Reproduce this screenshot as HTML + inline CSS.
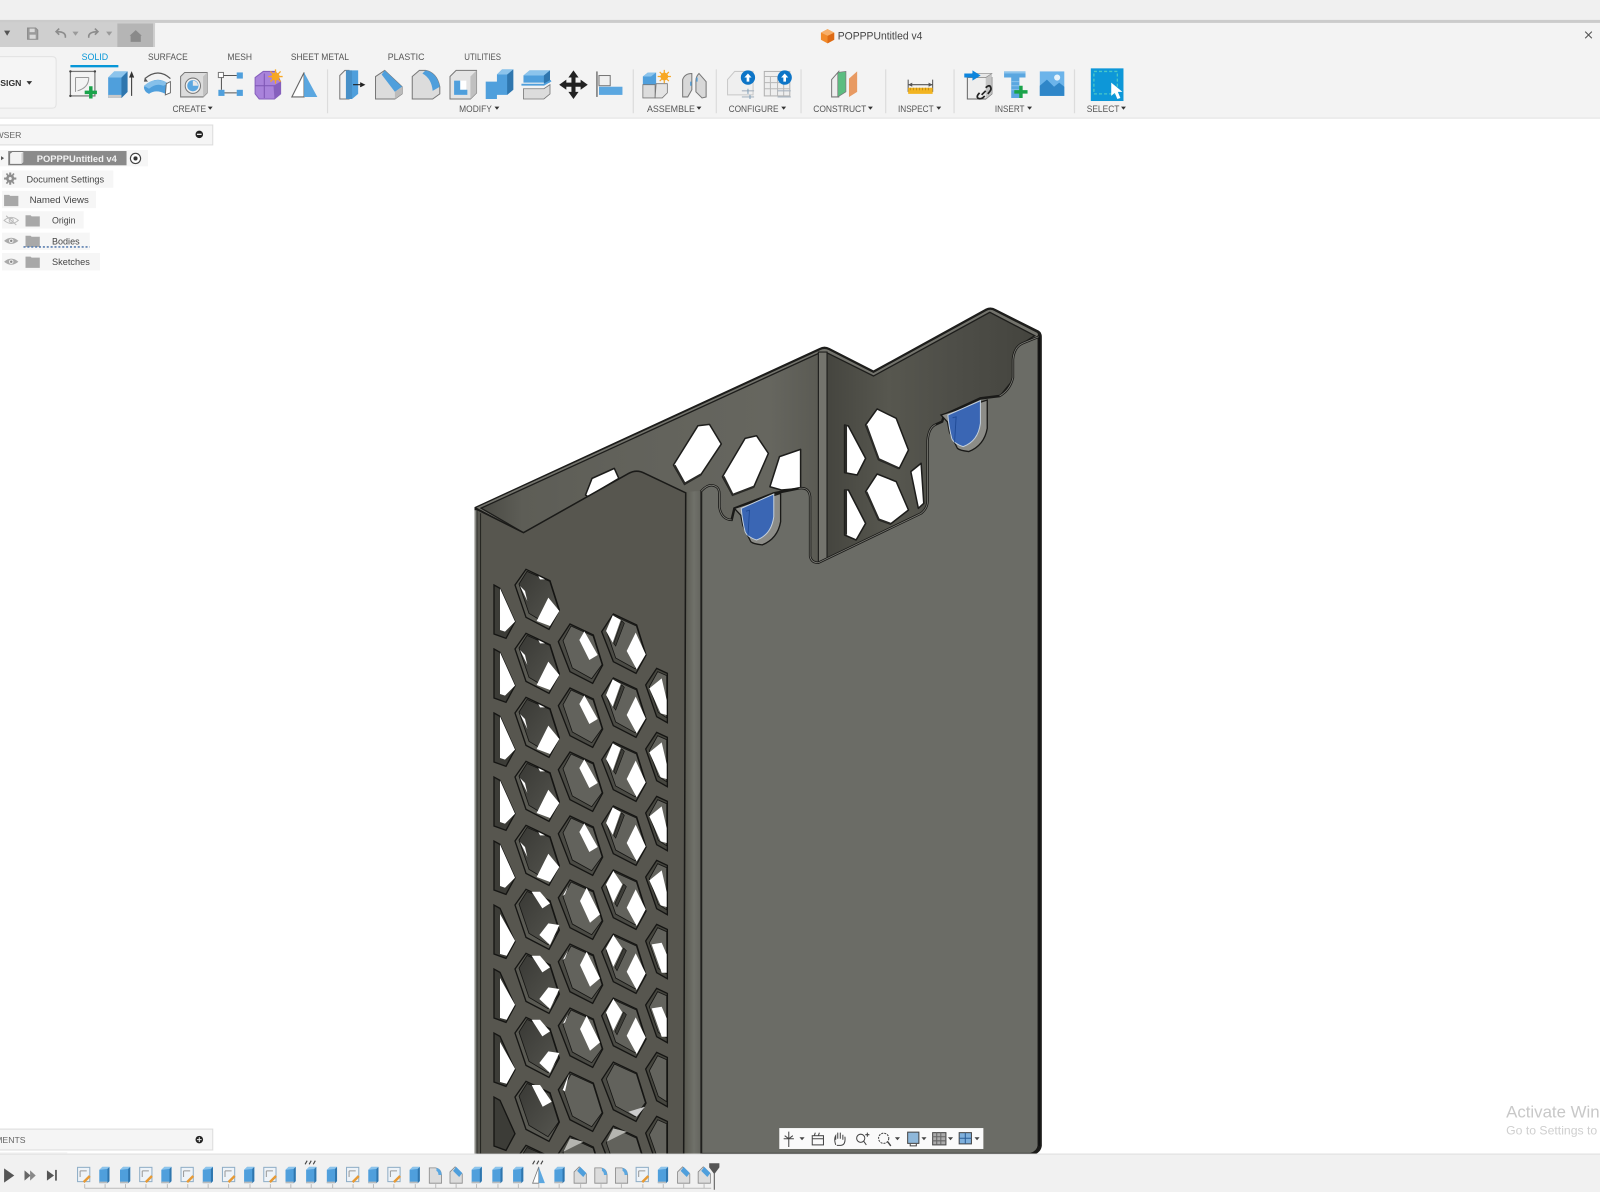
<!DOCTYPE html>
<html><head><meta charset="utf-8"><title>Fusion</title>
<style>
html,body{margin:0;padding:0;background:#fff;width:1600px;height:1192px;overflow:hidden}
svg{display:block;position:absolute;left:0;top:0;filter:blur(.35px)}
text{font-family:"Liberation Sans",sans-serif}
</style></head><body>
<svg xmlns="http://www.w3.org/2000/svg" width="1600" height="1192" viewBox="0 0 1568 1168.16">
<defs>
<linearGradient id="gBL" x1="0" y1="0" x2="1" y2="0"><stop offset="0" stop-color="#4a4a44"/><stop offset=".12" stop-color="#5d5d56"/><stop offset=".45" stop-color="#62625b"/><stop offset=".85" stop-color="#66665f"/><stop offset="1" stop-color="#5a5a53"/></linearGradient>
<linearGradient id="gBR" x1="0" y1="0" x2="1" y2="0"><stop offset="0" stop-color="#45453f"/><stop offset=".3" stop-color="#57574f"/><stop offset=".6" stop-color="#4e4e48"/><stop offset="1" stop-color="#44443e"/></linearGradient>
<linearGradient id="gC" x1="0" y1="0" x2="1" y2="0"><stop offset="0" stop-color="#58584f"/><stop offset=".6" stop-color="#70716a"/><stop offset="1" stop-color="#63645d"/></linearGradient>
<linearGradient id="gI" x1="0" y1="0" x2="1" y2="1"><stop offset="0" stop-color="#393935"/><stop offset="1" stop-color="#55554f"/></linearGradient>

<!-- perforation holes -->
<g id="hB"><polygon points="0,47 33,0 105,34 133,122 102,180 33,144" fill="#5a5a53" stroke="#151513" stroke-width="4"/><polygon points="12,44 36,6 104,36 131,122 99,166 42,132" fill="url(#gI)" stroke="#151513" stroke-width="2.500"/></g>
<g id="hC"><polygon points="0,53 35,0 105,33 133,123 103,178 35,143" fill="#4b4b45" stroke="#151513" stroke-width="4"/><polygon points="14,50 38,6 104,36 131,122 100,164 42,132" fill="#62625c" stroke="#151513" stroke-width="2.500"/></g>
<g id="B1"><use href="#hB"/><polygon points="65,155 100,85 133,125 105,170" fill="#fff"/><polygon points="15,50 30,65 37,95" fill="#fff"/><polygon points="70,20 90,30 75,30" fill="#fff"/></g>
<g id="B2"><use href="#hB"/><polygon points="50,7 75,7 105,42 82,57" fill="#fff"/><polygon points="73,137 100,102 133,107 105,167" fill="#fff"/></g>
<g id="B3"><use href="#hB"/><polygon points="50,11 75,11 110,61 83,76" fill="#fff"/></g>
<g id="C1"><use href="#hC"/><polygon points="63,48 78,22 118,93 93,108" fill="#fff"/></g>
<g id="C2"><use href="#hC"/><polygon points="65,63 85,23 125,103 95,128" fill="#fff"/><polygon points="13,48 30,18 20,43" fill="#fff"/></g>
<g id="C3"><use href="#hC"/><polygon points="13,54 32,5 20,58" fill="#fff"/></g>
<g id="D1"><use href="#hC"/><polygon points="13,51 33,4 57,18 33,86" fill="#fff"/><polygon points="75,111 102,56 132,121 105,166" fill="#fff"/><path d="M60,20 L36,88 L42,96 L68,28Z" fill="#3d3d38" stroke="#151513" stroke-width="2"/></g>
<g id="D2"><use href="#hC"/><polygon points="13,43 35,3 62,43 35,98" fill="#fff"/><polygon points="75,113 102,58 132,118 105,168" fill="#fff"/><path d="M66,42 L40,100 L46,110 L74,50Z" fill="#3d3d38" stroke="#151513" stroke-width="2"/></g>
<g id="D3"><use href="#hC"/><polygon points="80,149 130,134 105,164" fill="#ccc"/></g>
<g id="D4"><use href="#hC"/><polygon points="15,47 35,7 75,17" fill="#b5b5b0"/></g>
<g id="hE"><polygon points="0,50 33,0 65,15 65,163 33,145" fill="#46463f" stroke="#151513" stroke-width="4"/><polygon points="11,55 36,10 63,22 63,148 38,132" fill="#64645e" stroke="#151513" stroke-width="2.500"/></g>
<g id="E1"><use href="#hE"/><polygon points="11,60 48,30 63,95 63,140 45,135" fill="#fff"/></g>
<g id="E2"><use href="#hE"/><polygon points="18,60 48,55 63,90 63,145 48,145" fill="#fff"/></g>
<g id="hA"><polygon points="0,0 18,10 63,110 36,160 0,147" fill="#3c3c37" stroke="#151513" stroke-width="4"/></g>
<g id="A1"><use href="#hA"/><polygon points="18,10 63,110 33,140 18,135" fill="#fff"/></g>
<g id="A2"><use href="#hA"/><polygon points="18,27 63,107 38,152 18,147" fill="#fff"/></g>

<!-- timeline icons -->
<g id="tS"><rect x="-6" y="-7.500" width="12" height="14" fill="#eef3f8" stroke="#8fadc6"/><path d="M-3.500,-4 H3 M-3.500,-4 V2" stroke="#999" fill="none"/><path d="M0,7 L6,1" stroke="#e79a35" stroke-width="2.400"/></g>
<g id="tB"><path d="M-5,-5 L-2,-8 H5 V6 L3,8 H-5Z" fill="#4f9fdc"/><path d="M3,-6 L5,-8 V6 L3,8Z" fill="#2f76ae"/><path d="M-5,-5 L-2,-8 H5 L3,-6Z" fill="#8cc4ec"/><rect x="-5" y="6.500" width="8" height="1.500" fill="#bbb"/></g>
<g id="tF"><path d="M-6,8 V-7 H0 Q6,-6 6,1 V8Z" fill="#dcdcdc" stroke="#888" stroke-width=".8"/><path d="M1,-7 Q6,-6 6,0 L3,0 Q3,-3 1,-4Z" fill="#5ba7e0"/></g>
<g id="tC"><path d="M-6,8 V-3 L-1,-8 L6,-1 V8Z" fill="#dcdcdc" stroke="#888" stroke-width=".8"/><path d="M-3,-4 L0,-8 L6,-2 L3,2Z" fill="#4f9fdc"/></g>
<g id="tM"><path d="M-6,8 L0,-8 V8Z" fill="#fff" stroke="#777" stroke-width=".8"/><path d="M0,-8 L6,8 H0Z" fill="#5ba7e0"/></g>

<g id="eye"><path d="M-7,0 Q0,-6 7,0 Q0,6 -7,0Z" fill="#aaa"/><circle r="2.200" fill="#eee"/><circle r="1.200" fill="#888"/></g>
<g id="fold"><path d="M-7,-5 H-2 L-1,-4 H7 V6 H-7Z" fill="#a8a8a8"/></g>
<path id="tri" d="M-2.400,0 H2.400 L0,3Z" fill="#333"/>
</defs>

<rect width="1568" height="1169" fill="#fff"/>
<!-- top bands -->
<rect width="1568" height="20" fill="#f0f0f0"/>
<rect y="19.500" width="1568" height="3" fill="#cbcbcb"/>
<rect y="22.500" width="1568" height="93" fill="#f3f3f3"/>
<rect y="115" width="1568" height="1.500" fill="#e9e9e9"/>
<path d="M0,22.500 H152 V46 H0Z" fill="#cfcfcf"/>
<path d="M115,23 H150 V46 H115Z" fill="#b5b5b5"/>
<path d="M152,46 V26 Q152,22.500 156,22.500 H160 V46Z" fill="#f3f3f3"/>
<path d="M4,30 H10 L7,35Z" fill="#555"/>
<g fill="none" stroke="#8c8c8c">
<path d="M27,27.500 H35 L37,29.500 V38.500 H27Z" fill="#9b9b9b" stroke="#8c8c8c"/><rect x="29" y="28" width="5" height="3.500" fill="#d8d8d8" stroke="none"/><rect x="29" y="34" width="6" height="4" fill="#d8d8d8" stroke="none"/>
<path d="M64,37 Q65,31 56,31 M58,28 L55,31 L58,34" stroke-width="1.600"/>
<path d="M87,37 Q86,31 96,31 M93,28 L96,31 L93,34" stroke-width="1.600"/>
</g>
<path d="M71,31 H77 L74,35Z M104,31 H110 L107,35Z" fill="#9a9a9a"/>
<path d="M127,35 L133,29.500 L139,35 H138 V41 H128 V35Z" fill="#8a8a8a"/>

<!-- title -->
<path d="M811,28.500 L817.500,32 V39 L811,42.500 L804.500,39 V32Z" fill="#f28a2a"/><path d="M811,35 L817.500,32 V39 L811,42.500Z" fill="#dd6a14"/><path d="M811,28.500 L817.500,32 L811,35 L804.500,32Z" fill="#f7ae68"/>
<text x="821" y="38.500" font-size="10.500" fill="#444" textLength="83" lengthAdjust="spacingAndGlyphs">POPPPUntitled v4</text>
<path d="M1553.500,31 L1560,37.500 M1560,31 L1553.500,37.500" stroke="#555" stroke-width="1.100"/>

<!-- design box -->
<path d="M0,55.500 H51 Q55,55.500 55,59 V102 Q55,106 51,106 H0" fill="#f5f5f5" stroke="#e2e2e2"/>
<text x="21" y="84.500" font-size="8.500" font-weight="bold" fill="#333" text-anchor="end">DESIGN</text>
<path d="M26,79.500 H31.500 L28.700,83Z" fill="#333"/>

<!-- tabs -->
<g font-size="9" fill="#555">
<text x="80" y="59" fill="#0696d7" textLength="26" lengthAdjust="spacingAndGlyphs">SOLID</text>
<text x="145" y="59" textLength="39" lengthAdjust="spacingAndGlyphs">SURFACE</text>
<text x="223" y="59" textLength="24" lengthAdjust="spacingAndGlyphs">MESH</text>
<text x="285" y="59" textLength="57" lengthAdjust="spacingAndGlyphs">SHEET METAL</text>
<text x="380" y="59" textLength="36" lengthAdjust="spacingAndGlyphs">PLASTIC</text>
<text x="455" y="59" textLength="36" lengthAdjust="spacingAndGlyphs">UTILITIES</text>
<text x="169" y="110" textLength="33" lengthAdjust="spacingAndGlyphs">CREATE</text>
<text x="450" y="110" textLength="32" lengthAdjust="spacingAndGlyphs">MODIFY</text>
<text x="634" y="110" textLength="47" lengthAdjust="spacingAndGlyphs">ASSEMBLE</text>
<text x="714" y="110" textLength="49" lengthAdjust="spacingAndGlyphs">CONFIGURE</text>
<text x="797" y="110" textLength="52" lengthAdjust="spacingAndGlyphs">CONSTRUCT</text>
<text x="880" y="110" textLength="35" lengthAdjust="spacingAndGlyphs">INSPECT</text>
<text x="975" y="110" textLength="29" lengthAdjust="spacingAndGlyphs">INSERT</text>
<text x="1065" y="110" textLength="32" lengthAdjust="spacingAndGlyphs">SELECT</text>
</g>
<rect x="69" y="63.700" width="47" height="2.300" fill="#0696d7"/>
<use href="#tri" x="206" y="104.500"/><use href="#tri" x="487" y="104.500"/><use href="#tri" x="685" y="104.500"/><use href="#tri" x="768" y="104.500"/><use href="#tri" x="853" y="104.500"/><use href="#tri" x="920" y="104.500"/><use href="#tri" x="1009" y="104.500"/><use href="#tri" x="1101" y="104.500"/>
<g stroke="#dcdcdc" stroke-width="1.200"><path d="M321,68 V111 M620.600,68 V111 M702,68 V111 M785,68 V111 M868,68 V111 M935,68 V111 M1053,68 V111"/></g>

<!-- CREATE icons -->
<g>
<rect x="69" y="70" width="24" height="24" fill="none" stroke="#777" stroke-width="1.200"/>
<path d="M74,76 H87 M74,76 V90 M87,76 Q87,86 76,89" stroke="#999" fill="none"/>
<path d="M83,90.500 H95 M89,84.500 V96.500" stroke="#1aa34a" stroke-width="3.400" fill="none"/>
<g fill="#444"><circle cx="69" cy="70" r="1.200"/><circle cx="93" cy="70" r="1.200"/><circle cx="69" cy="94" r="1.200"/></g>
<path d="M106,76 L112,70 H125 V90 L119,96 H106Z" fill="#4f9fdc"/>
<path d="M119,76 L125,70 V90 L119,96Z" fill="#2f76ae"/>
<path d="M106,76 L112,70 H125 L119,76Z" fill="#8cc4ec"/>
<path d="M106,93 H119 V96 H106Z" fill="#c9c9c9"/>
<path d="M129,94 V74 M127,76 L129,71 L131,76" stroke="#333" fill="#333" stroke-width="1"/>
<path d="M142,77 Q155,66 167,77" stroke="#555" fill="none" stroke-width="1.200"/>
<path d="M142,76 L141,80 L145,80Z" fill="#555"/>
<path d="M141,85 Q153,73 165,82 L162,92 Q153,87 146,92 Q141,90 141,85Z" fill="#4f9fdc"/>
<path d="M141,84 Q153,74 165,82 L160,84 Q153,81 146,87Z" fill="#86c0ea"/>
<path d="M163,82 L167,80 V91 L162,93Z" fill="#fff" stroke="#666" stroke-width=".9"/>
<path d="M177,75 L181,71 H203 V91 L199,95 H177Z" fill="#dcdcdc" stroke="#777"/>
<path d="M199,75 L203,71 V91 L199,95Z" fill="#c0c0c0"/>
<circle cx="189" cy="84" r="7.500" fill="#f0f0f0" stroke="#777"/><circle cx="189" cy="84" r="5.500" fill="#5ba7e0"/><path d="M189,79 A5,5 0 0 1 194,84 L189,84Z" fill="#e8e8e8"/>
<g><rect x="214" y="71" width="5" height="5" fill="#fff" stroke="#777"/><rect x="232" y="71" width="6" height="6" fill="#4f9fdc"/><rect x="214" y="88" width="6" height="6" fill="#4f9fdc"/><rect x="232" y="88" width="6" height="6" fill="#4f9fdc"/><path d="M219,74 H232 M217,76 V88 M220,91 H232" stroke="#555" fill="none"/></g>
<path d="M250,76 L258,70 H270 L275,80 V92 L269,97 H254 L250,92Z" fill="#a983db" stroke="#8660bd"/>
<path d="M250,84 H269 M259,72 V96" stroke="#7e56b4" fill="none"/>
<path d="M268,84 L275,80 V92 L269,97Z" fill="#8660bd"/>
<circle cx="270" cy="75" r="4" fill="#f7a723"/><path d="M270,68 V82 M263,75 H277 M265,70 L275,80 M275,70 L265,80" stroke="#f7a723" stroke-width="1.300"/>
<path d="M286,95 L298,71 V95Z" fill="#fff" stroke="#666" stroke-width="1.100"/>
<path d="M298,71 L311,95 H298Z" fill="#5ba7e0"/>
</g>
<!-- MODIFY icons -->
<g>
<path d="M333,97 V74 L338,69 H342 V97Z" fill="#f1f1f1" stroke="#777"/>
<path d="M340,69 H351 V92 L345,97 H340Z" fill="#4f9fdc"/><path d="M339,69 H345 V97 H339Z" fill="#4790c8"/>
<path d="M346,83 H355 M353,81 L357,83 L353,85" stroke="#222" fill="#222"/>
<path d="M368,75 L377,69 L394,85 V92 L387,97 H368Z" fill="#dcdcdc" stroke="#777"/>
<path d="M374,73 L377,69 L394,85 L387,90Z" fill="#4f9fdc"/>
<path d="M387,90 L394,85 V92 L387,97Z" fill="#bbb"/>
<path d="M404,75 L411,69 H417 Q428,71 431,85 V92 L424,97 H404Z" fill="#dcdcdc" stroke="#777"/>
<path d="M414,72 L417,69 Q428,71 431,85 L424,89 Q423,77 414,72Z" fill="#4f9fdc"/>
<path d="M441,75 L447,69 H467 V91 L461,97 H441Z" fill="#e4e4e4" stroke="#777"/>
<path d="M461,75 L467,69 V91 L461,97Z" fill="#c0c0c0"/>
<rect x="445" y="79" width="12" height="14" fill="#fff"/>
<path d="M445,79 H451 V88 H458 V93 H445Z" fill="#4f9fdc"/>
<path d="M476,80 H487 V73 L492,68 H503 V88 L497,93 H487 V97 H476Z" fill="#4f9fdc"/>
<path d="M497,73 L503,68 V88 L497,93Z" fill="#2f76ae"/><path d="M487,73 L492,68 H503 L497,73Z" fill="#8cc4ec"/>
<path d="M513,74 L519,69 H539 V81 H513Z" fill="#4f9fdc"/><path d="M513,74 L519,69 H539 L533,74Z" fill="#8cc4ec"/><path d="M533,74 L539,69 V80 L533,82Z" fill="#2f76ae"/>
<path d="M511,83 H533 L540,79" stroke="#4f9fdc" stroke-width="1.800" fill="none"/>
<path d="M513,87 H533 L539,83 V92 L533,97 H513Z" fill="#dcdcdc" stroke="#777" stroke-width=".8"/>
<path d="M562,69 L567,76 H564 V81 H569 V78 L576,83 L569,88 V85 H564 V90 H567 L562,97 L557,90 H560 V85 H555 V88 L548,83 L555,78 V81 H560 V76 H557Z" fill="#222"/>
<path d="M585,70 V95" stroke="#666" stroke-width="1.300"/><rect x="587" y="74" width="11" height="10" fill="#efefef" stroke="#777"/><rect x="587" y="85" width="23" height="8" fill="#5ba7e0"/>
</g>
<!-- ASSEMBLE -->
<g>
<path d="M630,75 L635,71 H643 V83 H630Z" fill="#4f9fdc"/><path d="M630,75 L635,71 H643 L638,75Z" fill="#8cc4ec"/>
<path d="M630,83 H642 V96 H630Z" fill="#dcdcdc" stroke="#777" stroke-width=".8"/>
<path d="M643,82 L654,82 V91 L649,96 H642Z" fill="#e4e4e4" stroke="#777" stroke-width=".8"/>
<circle cx="651" cy="75" r="3.800" fill="#f7a723"/><path d="M651,68.500 V81.500 M644.500,75 H657.500 M646.500,70.500 L655.500,79.500 M655.500,70.500 L646.500,79.500" stroke="#f7a723" stroke-width="1.200"/>
<path d="M669,95 V78 Q671,72 678,72 V88 L674,95Z" fill="#d8d8d8" stroke="#777"/>
<path d="M692,95 V80 L685,72 Q682,75 682,79 V90 L688,96Z" fill="#d8d8d8" stroke="#777"/>
<path d="M677,84 V80 M683,80 V76" stroke="#4f9fdc" stroke-width="1.300"/>
</g>
<!-- CONFIGURE -->
<g>
<path d="M713,78 L720,70 H738 V93 H713Z" fill="#efefef" stroke="#c8c8c8"/>
<path d="M727,89 H739 M727,95 H739" stroke="#a8b4c0" stroke-width="1.200"/>
<path d="M733,87 V92 M735,93 V97" stroke="#7d9db8"/>
<circle cx="733" cy="76" r="7" fill="#0d75c7"/><path d="M733,72 L736.500,76 H734.300 V80 H731.700 V76 H729.500Z" fill="#fff"/>
<rect x="749" y="70" width="25" height="24" fill="#eee" stroke="#b0b0b0"/>
<path d="M749,75 H774 M755,75 V94 M762,75 V94 M768,75 V94 M749,81 H774 M749,87 H774" stroke="#b8b8b8" fill="none"/>
<path d="M762,89 H775 M762,95 H775" stroke="#a8b4c0" stroke-width="1.200"/>
<circle cx="769" cy="76" r="7" fill="#0d75c7"/><path d="M769,72 L772.500,76 H770.300 V80 H767.700 V76 H765.500Z" fill="#fff"/>
</g>
<!-- CONSTRUCT -->
<path d="M815,78 L822,70 V95 L815,95Z" fill="#eee" stroke="#777"/><path d="M821,71 L829,70 V90 L821,95Z" fill="#5cbd80" stroke="#777" stroke-width=".7"/>
<path d="M832,77 L840,70 V90 L832,95Z" fill="#e89a62"/>
<!-- INSPECT -->
<path d="M890,78 V90 M914,78 V90 M890,83 H914" stroke="#555" fill="none"/><path d="M890,83 L894,81 V85Z M914,83 L910,81 V85Z" fill="#555"/>
<rect x="890" y="86" width="24" height="6" fill="#f2b420"/>
<path d="M892,86 V88.500 M895,86 V88.500 M898,86 V88.500 M901,86 V88.500 M904,86 V88.500 M907,86 V88.500 M910,86 V88.500" stroke="#a97b10" stroke-width=".6"/>
<!-- INSERT -->
<path d="M948,76 H972 V92 L966,97 H948Z" fill="#eee" stroke="#666"/><path d="M966,76 L972,72 V92 L966,97Z" fill="#c4c4c4"/>
<path d="M948,76 L953,72 H972 L966,76Z" fill="#e8e8e8" stroke="#888" stroke-width=".6"/>
<path d="M945,72 H953 V69 L961,74 L953,79 V76 H945Z" fill="#0d85dd"/>
<path d="M962,93 L966,89 M966,86 Q970,82 971,86 Q972,88 968,92 M960,91 Q956,95 959,96.500 Q962,97.500 965,94" stroke="#222" stroke-width="1.700" fill="none"/>
<path d="M984,70 H1005 V76 H999 V96 H991 V76 H984Z" fill="#5ba7e0"/><rect x="984" y="70" width="21" height="2" fill="#8cc4ec"/>
<path d="M991,80 H999 M991,84 H999 M991,88 H999" stroke="#8cc4ec"/>
<path d="M1000.500,84 V96 M994,90 H1007" stroke="#1aa34a" stroke-width="3.400"/>
<rect x="1019" y="70" width="24" height="24" fill="#6cb4ea"/>
<path d="M1019,94 V84 L1026,78 L1033,85 L1038,81 L1043,85 V94Z" fill="#2f86c8"/>
<circle cx="1036" cy="76" r="3" fill="#e7f3fb"/>
<!-- SELECT -->
<rect x="1069" y="67" width="32" height="32" fill="#0d97d8"/>
<rect x="1072" y="70" width="23" height="22" fill="none" stroke="#4ac7c7" stroke-width="1.300" stroke-dasharray="3 2"/>
<path d="M1089,81 V94 L1092.500,91 L1095,97 L1098,96 L1095.500,90 H1100Z" fill="#fff"/>

<!-- Browser -->
<rect x="-1" y="122.500" width="209.500" height="19.500" fill="#f5f5f5" stroke="#dcdcdc"/>
<text x="21" y="135" font-size="8.500" fill="#666" text-anchor="end">BROWSER</text>
<circle cx="195.300" cy="131.700" r="3.700" fill="#222"/><rect x="193" y="131" width="4.600" height="1.300" fill="#eee"/>
<g fill="#f6f6f6">
<rect x="0" y="147" width="145" height="16"/><rect x="2" y="167" width="109" height="17"/><rect x="2" y="187" width="92" height="17"/><rect x="2" y="207" width="80" height="17"/><rect x="2" y="228" width="86" height="17"/><rect x="2" y="248" width="96" height="17"/>
</g>
<path d="M1,153 L4,155 L1,157Z" fill="#555"/>
<rect x="8" y="148" width="116" height="14" fill="#8a8a8a"/>
<path d="M9.500,150.500 L12,148.500 H23 V159 L21,161 H9.500Z" fill="#f3f3f3" stroke="#777" stroke-width=".8"/><path d="M21,150.500 L23,148.500 V159 L21,161Z" fill="#cfcfcf"/>
<text x="36" y="158.800" font-size="9" font-weight="bold" fill="#f2f2f2" textLength="78.500" lengthAdjust="spacingAndGlyphs">POPPPUntitled v4</text>
<circle cx="132.800" cy="155.300" r="5" fill="#fff" stroke="#444" stroke-width="1.100"/><circle cx="132.800" cy="155.300" r="2" fill="#333"/>
<g fill="#8e8e8e"><circle cx="10" cy="175" r="4"/><path d="M9,169 H11 V181 H9Z M4,174 H16 V176 H4Z M5.700,170.500 L7,169.500 L14.300,179.500 L13,180.500Z M13,169.500 L14.300,170.500 L7,180.500 L5.700,179.500Z"/></g><circle cx="10" cy="175" r="1.500" fill="#eee"/>
<g font-size="9" fill="#444">
<text x="26" y="178.700" textLength="76" lengthAdjust="spacingAndGlyphs">Document Settings</text>
<text x="29" y="199" textLength="58" lengthAdjust="spacingAndGlyphs">Named Views</text>
<text x="51" y="219" textLength="23" lengthAdjust="spacingAndGlyphs">Origin</text>
<text x="51" y="239.500" textLength="27" lengthAdjust="spacingAndGlyphs">Bodies</text>
<text x="51" y="259.700" textLength="37" lengthAdjust="spacingAndGlyphs">Sketches</text>
</g>
<use href="#fold" x="11" y="196"/><use href="#fold" x="32" y="216"/><use href="#fold" x="32" y="236"/><use href="#fold" x="32" y="256.500"/>
<g transform="translate(11,216)"><path d="M-7,0 Q0,-6 7,0 Q0,6 -7,0Z" fill="none" stroke="#bbb"/><circle r="2" fill="none" stroke="#bbb"/><path d="M-5,-4.500 L5,4.500" stroke="#bbb"/></g>
<use href="#eye" x="11" y="236"/><use href="#eye" x="11" y="256.500"/>
<path d="M23,242 H88" stroke="#5b7fb0" stroke-width="1.600" stroke-dasharray="2 1.800"/>

<!-- Model -->
<path d="M465,497 L803,341 Q808,338.500 813,341 L856,363 L966,302.500 Q971,300 976,303 L1018,324 Q1021,326 1021,330 L1021,1123 Q1020,1130 1012,1132 L465,1132Z" fill="#1d1d1b"/>
<path d="M467,497.500 L804,343 Q808,341 812,343 L856,365.500 L967,304.500 Q971,302.500 975,305 L1016,326 Q1018.500,327.500 1016,330 L900,500 L513,522Z" fill="#73736c"/>
<path d="M471.500,498 L804,345.500 V552 L672,552 V500 L513,522Z" fill="url(#gBL)" stroke="#1d1d1b" stroke-width="1.300"/>
<path d="M810,345.500 L856,368.500 L970,306 L1014,329 L1003,336 L993,349 V372 L980,388 L909,428 V552 H810Z" fill="url(#gBR)" stroke="#1d1d1b" stroke-width="1.300"/>
<rect x="802" y="345" width="8.500" height="208" fill="#74746d" stroke="#1d1d1b" stroke-width="1.100"/>
<g fill="#fff" stroke="#1d1d1b" stroke-width="1.500" stroke-linejoin="round">
<polygon points="660,455.700 684,417.200 695.300,415.900 706.900,435.100 687,464.900 670.900,474.700"/>
<polygon points="708,467.200 730.200,429.600 741.400,427 753,444.300 738.800,477 717.800,485"/>
<polygon points="754.500,477 763.900,447.500 784.600,440.400 784.600,478.600 765.800,480.200"/>
<polygon points="573.800,485.100 580.200,468.800 602,459 606.400,468.800 576.400,486.800"/>
<polygon points="827.700,416.500 831.400,417.500 848.300,449.200 840,465.500 827.700,463.200"/>
<polygon points="848.300,416.500 859.600,400.800 878.300,410 890.300,441 881.300,459 861.400,450.800"/>
<polygon points="892.600,462.200 902.700,454 905.300,493.300 900,498.200"/>
<polygon points="848.300,481.800 859.600,464.500 878.300,472 890.300,499.800 872.700,513.500 861.400,509.600"/>
<polygon points="827.700,480.200 831.400,480.200 848.300,512.900 839,529.200 827.700,524.300"/>
</g>
<g stroke="#2a2a27" stroke-width="2.200" fill="none"><path d="M829,417 V463 M829,480 V524 M661,456 L671,474 L687,465 M709,467 L718,485 L739,477 M849,417 L861,450 L881,459 M849,482 L861,509 L873,513.500"/></g>
<!-- right face -->
<path d="M687,481.500 Q695,472.500 702,477 Q705,479 705,484 V497 Q707,509 717,509.500 L719.700,498.200 L758.300,483.500 L782.700,478.600 Q793,477 793.900,486.800 V545 Q795,551.500 802,551.500 L902.700,503.100 Q909,498 909,491 V432 Q910,419 917,416 L923.300,413.200 L925.200,406.700 L960.800,390.400 L979.600,388.100 Q990,382 992.700,370 V352 Q994,340 1002,336.500 L1018,330 V1123 Q1017,1129 1010,1131 H687Z" fill="#6b6c66" stroke="#1a1a18" stroke-width="2.400"/>
<path d="M687,481.500 Q695,472.500 702,477 Q705,479 705,484 V497 Q707,509 717,509.500 M782.700,478.600 Q793,477 793.900,486.800 V545 Q795,551.500 802,551.500 L902.700,503.100 Q909,498 909,491 V432 Q910,419 917,416 M979.600,388.100 Q990,382 992.700,370 V352 Q994,340 1002,336.500 L1018,330" fill="none" stroke="#7c7c76" stroke-width=".8"/>
<path d="M1018.500,330 V1123" stroke="#111" stroke-width="1.600" fill="none"/>
<!-- blue tabs -->
<g>
<path d="M719.700,498.200 L765,483.500 V511.300 Q762,528 747,534 Q738,533 735.800,530.900 L728,515 L726,505Z" fill="#8c8c87" stroke="#1a1a18" stroke-width="1.300"/>
<path d="M726.400,498.200 L758.300,484.100 V506.400 Q756,524 741.400,529.200 Q732,526 730.200,521 Q727.500,511 726.400,498.200Z" fill="#3a66b4" stroke="#c3cfdc" stroke-width="1"/>
<path d="M731,501 L734.500,500 L733,525" stroke="#1f4a96" stroke-width=".9" fill="none"/>
</g>
<g transform="translate(202.500,-91.500)">
<path d="M719.700,498.200 L765,483.500 V511.300 Q762,528 747,534 Q738,533 735.800,530.900 L728,515 L726,505Z" fill="#8c8c87" stroke="#1a1a18" stroke-width="1.300"/>
<path d="M726.400,498.200 L758.300,484.100 V506.400 Q756,524 741.400,529.200 Q732,526 730.200,521 Q727.500,511 726.400,498.200Z" fill="#3a66b4" stroke="#c3cfdc" stroke-width="1"/>
<path d="M731,501 L734.500,500 L733,525" stroke="#1f4a96" stroke-width=".9" fill="none"/>
</g>
<!-- corner column -->
<path d="M670,484 L672,482 L687,481 V1131 H670Z" fill="url(#gC)"/>
<path d="M686.800,481 V1131" stroke="#2a2a27" stroke-width="1.100"/>
<!-- left face -->
<path d="M467,499 L513,522 L616,464 Q624,459.500 632,464 L672,483 L670,1131 H467Z" fill="#57564f" stroke="#1a1a18" stroke-width="1.500"/>
<path d="M471,503 V1131" stroke="#1d1d1b" stroke-width=".9"/><rect x="465" y="500" width="2" height="631" fill="#8b8b85"/>
<!-- perforation -->
<g transform="translate(460.600,548.800) scale(.3267)">
<use href="#A1" x="72" y="75"/><use href="#A1" x="72" y="267"/><use href="#A1" x="72" y="459"/><use href="#A1" x="72" y="651"/><use href="#A1" x="72" y="843"/><use href="#A2" x="72" y="1035"/><use href="#A2" x="72" y="1227"/><use href="#A2" x="72" y="1419"/><use href="#hA" x="72" y="1611"/>
<use href="#B1" x="135" y="28"/><use href="#B1" x="135" y="220"/><use href="#B1" x="135" y="412"/><use href="#B1" x="135" y="604"/><use href="#B1" x="135" y="796"/><use href="#B2" x="135" y="988"/><use href="#B2" x="135" y="1180"/><use href="#B2" x="135" y="1372"/><use href="#B3" x="135" y="1564"/><use href="#hB" x="135" y="1756"/>
<use href="#C1" x="265" y="192"/><use href="#C1" x="265" y="384"/><use href="#C1" x="265" y="576"/><use href="#C1" x="265" y="768"/><use href="#C2" x="265" y="960"/><use href="#C2" x="265" y="1152"/><use href="#C2" x="265" y="1344"/><use href="#C3" x="265" y="1536"/><use href="#D4" x="265" y="1728"/>
<use href="#D1" x="395" y="162"/><use href="#D1" x="395" y="354"/><use href="#D1" x="395" y="546"/><use href="#D1" x="395" y="738"/><use href="#D2" x="395" y="930"/><use href="#D2" x="395" y="1122"/><use href="#D2" x="395" y="1314"/><use href="#D3" x="395" y="1506"/><use href="#D4" x="395" y="1698"/>
<use href="#E1" x="527" y="325"/><use href="#E1" x="527" y="517"/><use href="#E1" x="527" y="709"/><use href="#E1" x="527" y="901"/><use href="#E2" x="527" y="1093"/><use href="#E2" x="527" y="1285"/><use href="#hE" x="527" y="1477"/><use href="#hE" x="527" y="1669"/>
</g>

<!-- Comments -->
<rect x="-1" y="1106.500" width="209.500" height="20.500" fill="#f5f5f5" stroke="#dcdcdc"/>
<text x="25" y="1120" font-size="8.500" fill="#666" text-anchor="end">COMMENTS</text>
<circle cx="195.300" cy="1116.800" r="3.700" fill="#222"/><path d="M193,1116.800 H197.600 M195.300,1114.500 V1119.100" stroke="#eee" stroke-width="1"/>

<!-- Activate -->
<text x="1476" y="1095" font-size="16.500" fill="#c8c8c8">Activate Windows</text>
<text x="1476" y="1112" font-size="12" fill="#cfcfcf">Go to Settings to activate Windows.</text>

<!-- Navigation bar -->
<rect x="763.700" y="1105.500" width="200" height="20.500" fill="#fafafa"/>
<g fill="none" stroke="#444" stroke-width="1">
<path d="M773,1109 V1124 M768,1116 H778 M769,1113 L773,1116 L777,1113"/>
<rect x="796" y="1113" width="11" height="9"/><path d="M796,1116 H807 M798,1113 L799,1110 M802,1113 L803,1110"/>
<path d="M819,1122 Q817,1116 819,1113 V1117 M821,1110 V1116 M823.500,1110 V1116 M826,1112 V1117 M828,1114 Q829,1122 824,1122.500 H820"/>
<circle cx="843.500" cy="1115.500" r="4"/><path d="M846.500,1118.500 L849,1122 M850,1110 V1114 M848,1112 H852"/>
<circle cx="866" cy="1115.500" r="5" stroke-dasharray="2 1"/><path d="M870,1119 L873,1123" stroke-width="1.400"/>
<rect x="889.500" y="1109.500" width="11" height="11" fill="#8fb8da"/><path d="M892,1121 V1123 H898 V1121"/>
<rect x="914" y="1110" width="13" height="12" fill="#aaa"/><path d="M918,1110 V1122 M922,1110 V1122 M914,1114 H927 M914,1118 H927" stroke="#666"/>
<rect x="940" y="1110" width="12" height="11" fill="#7fb0dc"/><path d="M946,1110 V1121 M940,1115.500 H952" stroke="#2a5d96"/>
</g>
<g fill="#444"><path d="M783.500,1114.500 H788.500 L786,1117.500Z M877,1114.500 H882 L879.500,1117.500Z M903,1114.500 H908 L905.500,1117.500Z M929,1114.500 H934 L931.500,1117.500Z M955,1114.500 H960 L957.500,1117.500Z"/></g>

<!-- Timeline -->
<rect y="1131" width="1568" height="38" fill="#f1f1f1"/>
<rect y="1130.500" width="1568" height="1" fill="#dedede"/>
<rect x="0" y="1129.500" width="66" height="1.500" fill="#ececec"/>
<path d="M4,1145 L14,1152 L4,1159Z" fill="#555"/>
<path d="M24,1147 L30,1152 L24,1157Z" fill="#666"/><path d="M29.500,1147 L35,1152 L29.500,1157Z" fill="#888"/>
<path d="M46,1147 L53,1152 L46,1157Z" fill="#555"/><rect x="54" y="1146.500" width="1.700" height="10.500" fill="#555"/>

<g>
<use href="#tS" x="82" y="1151.500"/><use href="#tB" x="102.300" y="1151.500"/><use href="#tB" x="122.600" y="1151.500"/><use href="#tS" x="142.900" y="1151.500"/><use href="#tB" x="163.100" y="1151.500"/><use href="#tS" x="183.400" y="1151.500"/><use href="#tB" x="203.700" y="1151.500"/><use href="#tS" x="224" y="1151.500"/><use href="#tB" x="244.200" y="1151.500"/><use href="#tS" x="264.500" y="1151.500"/><use href="#tB" x="284.800" y="1151.500"/><use href="#tB" x="305" y="1151.500"/><use href="#tB" x="325.300" y="1151.500"/><use href="#tS" x="345.600" y="1151.500"/><use href="#tB" x="365.900" y="1151.500"/><use href="#tS" x="386.100" y="1151.500"/><use href="#tB" x="406.400" y="1151.500"/><use href="#tF" x="426.700" y="1151.500"/><use href="#tC" x="447" y="1151.500"/><use href="#tB" x="467.200" y="1151.500"/><use href="#tB" x="487.500" y="1151.500"/><use href="#tB" x="507.800" y="1151.500"/><use href="#tM" x="528" y="1151.500"/><use href="#tB" x="548.300" y="1151.500"/><use href="#tC" x="568.600" y="1151.500"/><use href="#tF" x="588.900" y="1151.500"/><use href="#tF" x="609.100" y="1151.500"/><use href="#tS" x="629.400" y="1151.500"/><use href="#tB" x="649.700" y="1151.500"/><use href="#tC" x="670" y="1151.500"/><use href="#tC" x="690.200" y="1151.500"/>
</g>
<path d="M299,1141 L301,1137.500 M303,1141 L305,1137.500 M307,1141 L309,1137.500 M522,1141 L524,1137.500 M526,1141 L528,1137.500 M530,1141 L532,1137.500" stroke="#444" stroke-width="1.100"/>
<path d="M83,1164.500 H697 M83,1160.500 V1164.500 M103,1160.500 V1164.500 M123,1160.500 V1164.500 M143,1160.500 V1164.500 M164,1160.500 V1164.500 M184,1160.500 V1164.500 M204,1160.500 V1164.500 M224,1160.500 V1164.500 M245,1160.500 V1164.500 M265,1160.500 V1164.500 M285,1160.500 V1164.500 M305,1160.500 V1164.500 M326,1160.500 V1164.500 M346,1160.500 V1164.500 M366,1160.500 V1164.500 M386,1160.500 V1164.500 M407,1160.500 V1164.500 M427,1160.500 V1164.500 M447,1160.500 V1164.500 M467,1160.500 V1164.500 M488,1160.500 V1164.500 M508,1160.500 V1164.500 M528,1160.500 V1164.500 M548,1160.500 V1164.500 M569,1160.500 V1164.500 M589,1160.500 V1164.500 M609,1160.500 V1164.500 M630,1160.500 V1164.500 M650,1160.500 V1164.500 M670,1160.500 V1164.500 M690,1160.500 V1164.500" stroke="#bbb" fill="none"/>
<path d="M695,1140 H705 V1144 L700.500,1150 V1166 H699.500 V1150 L695,1144Z" fill="#555"/>
</svg>
</body></html>
